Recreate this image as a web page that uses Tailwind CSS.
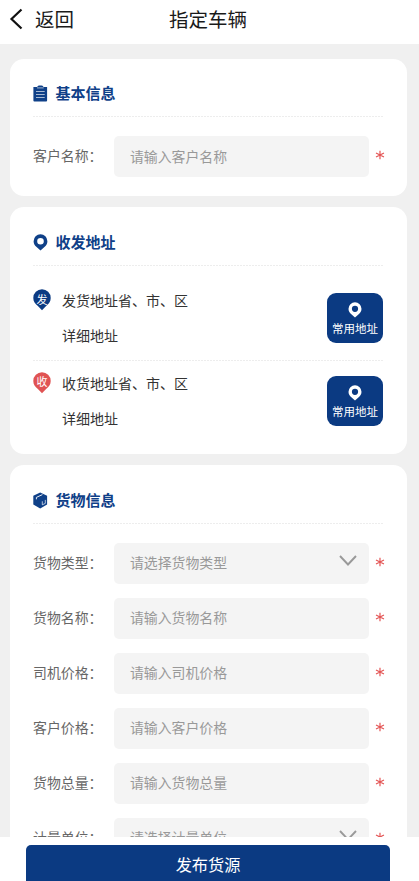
<!DOCTYPE html>
<html lang="zh-CN">
<head>
<meta charset="utf-8">
<meta name="viewport" content="width=device-width, initial-scale=1">
<title>指定车辆</title>
<script src="https://cdn.jsdelivr.net/npm/@tailwindcss/browser@4"></script>
</head>
<body class="font-['Noto_Sans_CJK_SC',sans-serif] bg-[#f0f0f0]">
<svg class="hidden">
  <symbol id="pin" viewBox="0 0 14 17"><path fill="currentColor" fill-rule="evenodd" d="M7 .3a6.900 6.900 0 0 0-6.900 6.900c0 2.600 1.200 4.200 2.700 5.600L7 16.600l4.200-3.800c1.500-1.400 2.700-3 2.700-5.600A6.900 6.900 0 0 0 7 .3ZM7 3.900a3.300 3.300 0 1 1 0 6.600A3.300 3.300 0 0 1 7 3.900Z"/></symbol>
  <symbol id="drop" viewBox="0 0 18 22"><path fill="currentColor" d="M9 .3a8.700 8.700 0 0 0-8.700 8.700c0 3.600 1.800 5.700 4.600 8.100L9 21.300l4.100-4.200c2.800-2.400 4.600-4.500 4.600-8.100A8.700 8.700 0 0 0 9 .3Z"/></symbol>
  <symbol id="dash" viewBox="0 0 351 1"><path d="M0 .5H351" stroke="#ededed" stroke-dasharray="2 1"/></symbol>
  <symbol id="chev" viewBox="0 0 18 11"><path d="M1 1l8 8.500L17 1" fill="none" stroke="#999" stroke-width="1.900"/></symbol>
  <symbol id="star" viewBox="0 0 10 10"><path d="M5 .7v8.600M1 3l8 4M9 3L1 7" fill="none" stroke="#e45656" stroke-width="1.200"/></symbol>
</svg>
<div class="h-[881px] w-[419px] flex flex-col overflow-hidden">
  <header class="h-[44px] shrink-0 bg-white flex items-center text-[19.500px] leading-[28px] text-[#1a1a1a] pb-[7px]">
    <svg class="ml-[9px] w-[14px] h-[22px] shrink-0" viewBox="0 0 14 22"><path d="M12.500 1.500L2.500 11l10 9.500" fill="none" stroke="#111" stroke-width="2.200"/></svg>
    <span class="ml-[12px] w-[134px]">返回</span>
    <h1>指定车辆</h1>
  </header>

  <main class="h-[793px] shrink-0 overflow-hidden pt-[15px] pl-[10px] pr-[12.500px] flex flex-col gap-[11.500px]">
    <section class="bg-white rounded-[14px] h-[136.500px] shrink-0 pl-[23px] pr-[22px]">
      <div class="h-[57px] pt-[12px] flex items-center text-[#0f4088]">
        <svg class="w-[15px] h-[17px]" viewBox="0 0 15 17"><path fill="currentColor" d="M.4 2h13.700v13.500a1 1 0 0 1-1 1H1.400a1 1 0 0 1-1-1z"/><path fill="currentColor" d="M4 2.300C4.500.9 5.500.5 7.300.5s2.900.4 3.400 1.800z"/><path d="M4 2.900h6.700M3 6.500h8.700M3 9.500h8.700M3 12.500h8.700" stroke="#fff" stroke-opacity=".8" stroke-width=".8"/></svg>
        <h2 class="ml-[7.500px] -mt-[2px] text-[15px] leading-[20px] font-bold">基本信息</h2>
      </div>
      <svg class="w-[351px] h-px"><use href="#dash"/></svg>
      <div class="mt-[19px] h-[41px] flex items-center text-[13.900px]">
        <label class="w-[81.500px] pb-[2px] text-[#666]">客户名称：</label>
        <div class="w-[254.500px] h-[41px] rounded-[5px] bg-[#f4f4f4] pl-[15.500px] pb-[1px] flex items-center text-[#999]">请输入客户名称</div>
        <svg class="ml-[6px] -mt-[3px] w-[10px] h-[10px]"><use href="#star"/></svg>
      </div>
    </section>

    <section class="bg-white rounded-[14px] h-[246.500px] shrink-0 pl-[23px] pr-[22px]">
      <div class="h-[58px] pt-[12px] flex items-center text-[#0f4088]">
        <svg class="w-[15px] h-[17px]"><use href="#pin"/></svg>
        <h2 class="ml-[7.500px] -mt-[1px] text-[15px] leading-[20px] font-bold">收发地址</h2>
      </div>
      <svg class="w-[351px] h-px"><use href="#dash"/></svg>
      <div class="h-[94px] pt-[23px] flex items-start text-[14px] text-[#333]">
        <div class="w-[18px] h-[22px] grid">
          <svg class="col-start-1 row-start-1 w-[18px] h-[22px] text-[#0b3a82]"><use href="#drop"/></svg>
          <span class="col-start-1 row-start-1 text-center text-[11px] leading-[20px] text-white">发</span>
        </div>
        <div class="ml-[11px] w-[265px] leading-[35px] -mt-[6px]"><p>发货地址省、市、区</p><p>详细地址</p></div>
        <button class="mt-[4px] w-[56px] h-[50px] rounded-[9px] bg-[#0b3a82] text-white text-[11.500px] leading-[16px] flex flex-col items-center pt-[9px]"><svg class="w-[14px] h-[16px] mb-[2px]"><use href="#pin"/></svg>常用地址</button>
      </div>
      <svg class="w-[351px] h-px"><use href="#dash"/></svg>
      <div class="pt-[11px] flex items-start text-[14px] text-[#333]">
        <div class="w-[18px] h-[22px] grid">
          <svg class="col-start-1 row-start-1 w-[18px] h-[22px] text-[#e05353]"><use href="#drop"/></svg>
          <span class="col-start-1 row-start-1 text-center text-[11px] leading-[19px] text-white">收</span>
        </div>
        <div class="ml-[11px] w-[265px] leading-[35px] -mt-[6px]"><p>收货地址省、市、区</p><p>详细地址</p></div>
        <button class="mt-[4px] w-[56px] h-[50px] rounded-[9px] bg-[#0b3a82] text-white text-[11.500px] leading-[16px] flex flex-col items-center pt-[9px]"><svg class="w-[14px] h-[16px] mb-[2px]"><use href="#pin"/></svg>常用地址</button>
      </div>
    </section>

    <section class="bg-white rounded-[14px] h-[460px] shrink-0 pl-[23px] pr-[22px]">
      <div class="h-[58px] pt-[12px] flex items-center text-[#0f4088]">
        <svg class="w-[15px] h-[17px]" viewBox="0 0 15 17"><path fill="currentColor" d="M7.200.4l6.900 3.300v8.900l-6.900 3.900L.3 12.600V3.700z"/><path d="M3.400 7.300V5.400l6-2.800" fill="none" stroke="#fff" stroke-width=".9"/><path d="M9.300 9.300v3.500l3-1.400V7.900" fill="none" stroke="#fff" stroke-opacity=".85" stroke-width=".8"/></svg>
        <h2 class="ml-[7.500px] -mt-[1px] text-[15px] leading-[20px] font-bold">货物信息</h2>
      </div>
      <svg class="w-[351px] h-px"><use href="#dash"/></svg>
      <div class="mt-[18.500px] flex flex-col gap-[14px] text-[13.900px]">
        <div class="h-[41px] flex items-center">
          <label class="w-[81.500px] pb-[2px] text-[#666]">货物类型：</label>
          <div class="w-[254.500px] h-[41px] rounded-[5px] bg-[#f4f4f4] pl-[15.500px] pr-[12px] pb-[1px] flex items-center justify-between text-[#999]">请选择货物类型<svg class="w-[18px] h-[11px] -mt-[5px]"><use href="#chev"/></svg></div>
          <svg class="ml-[6px] -mt-[3px] w-[10px] h-[10px]"><use href="#star"/></svg>
        </div>
        <div class="h-[41px] flex items-center">
          <label class="w-[81.500px] pb-[2px] text-[#666]">货物名称：</label>
          <div class="w-[254.500px] h-[41px] rounded-[5px] bg-[#f4f4f4] pl-[15.500px] pb-[1px] flex items-center text-[#999]">请输入货物名称</div>
          <svg class="ml-[6px] -mt-[3px] w-[10px] h-[10px]"><use href="#star"/></svg>
        </div>
        <div class="h-[41px] flex items-center">
          <label class="w-[81.500px] pb-[2px] text-[#666]">司机价格：</label>
          <div class="w-[254.500px] h-[41px] rounded-[5px] bg-[#f4f4f4] pl-[15.500px] pb-[1px] flex items-center text-[#999]">请输入司机价格</div>
          <svg class="ml-[6px] -mt-[3px] w-[10px] h-[10px]"><use href="#star"/></svg>
        </div>
        <div class="h-[41px] flex items-center">
          <label class="w-[81.500px] pb-[2px] text-[#666]">客户价格：</label>
          <div class="w-[254.500px] h-[41px] rounded-[5px] bg-[#f4f4f4] pl-[15.500px] pb-[1px] flex items-center text-[#999]">请输入客户价格</div>
          <svg class="ml-[6px] -mt-[3px] w-[10px] h-[10px]"><use href="#star"/></svg>
        </div>
        <div class="h-[41px] flex items-center">
          <label class="w-[81.500px] pb-[2px] text-[#666]">货物总量：</label>
          <div class="w-[254.500px] h-[41px] rounded-[5px] bg-[#f4f4f4] pl-[15.500px] pb-[1px] flex items-center text-[#999]">请输入货物总量</div>
          <svg class="ml-[6px] -mt-[3px] w-[10px] h-[10px]"><use href="#star"/></svg>
        </div>
        <div class="h-[41px] flex items-center">
          <label class="w-[81.500px] pb-[2px] text-[#666]">计量单位：</label>
          <div class="w-[254.500px] h-[41px] rounded-[5px] bg-[#f4f4f4] pl-[15.500px] pr-[12px] pb-[1px] flex items-center justify-between text-[#999]">请选择计量单位<svg class="w-[18px] h-[11px] -mt-[5px]"><use href="#chev"/></svg></div>
          <svg class="ml-[6px] -mt-[3px] w-[10px] h-[10px]"><use href="#star"/></svg>
        </div>
      </div>
    </section>
  </main>

  <footer class="h-[44px] shrink-0 bg-white pt-[8px] pl-[26px] pr-[29px]">
    <button class="w-full h-[44px] rounded-[5px] bg-[#0b3a82] text-white text-[16.200px] leading-[24px] pb-[6px]">发布货源</button>
  </footer>
</div>
</body>
</html>
